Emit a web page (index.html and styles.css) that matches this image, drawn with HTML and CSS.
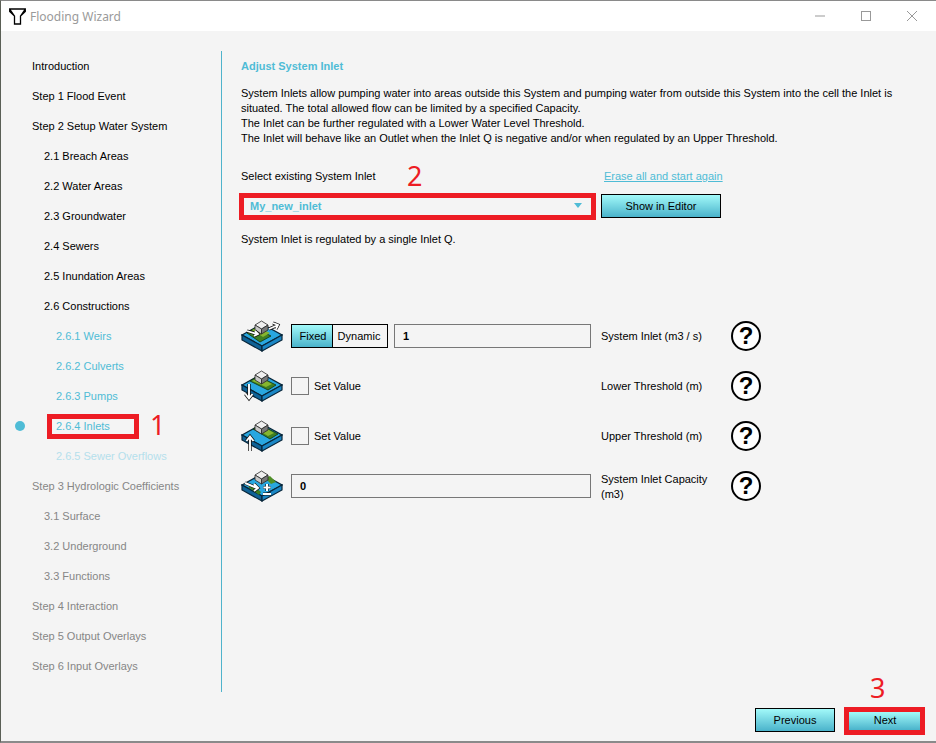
FILE: index.html
```html
<!DOCTYPE html>
<html lang="en">
<head>
<meta charset="utf-8">
<title>Flooding Wizard</title>
<link rel="stylesheet" href="styles.css">
</head>
<body>
<svg class="defs" width="0" height="0" aria-hidden="true">
  <symbol id="base" viewBox="0 0 42 34">
    <polygon points="1,16 21,5 41,16 21,27" fill="#29a7e0" stroke="#08263a" stroke-width="1.2"/>
    <polygon points="1,16 21,27 21,32 1,21" fill="#0f6296" stroke="#08263a" stroke-width="1.2"/>
    <polygon points="21,27 41,16 41,21 21,32" fill="#1a86c4" stroke="#08263a" stroke-width="1.2"/>
  </symbol>
  <symbol id="cube" viewBox="0 0 42 34">
    <polygon points="14,6 20.500,2 27,6 20.500,10" fill="#efefef" stroke="#2a2a2a" stroke-width=".8"/>
    <polygon points="14,6 20.500,10 20.500,15 14,11" fill="#c8c8c8" stroke="#2a2a2a" stroke-width=".8"/>
    <polygon points="20.500,10 27,6 27,11 20.500,15" fill="#777" stroke="#2a2a2a" stroke-width=".8"/>
  </symbol>
</svg>
<div class="window">
  <header class="titlebar">
    <svg class="app-logo" viewBox="0 0 17 17"><path d="M.7 1H16.300V3.500L11.500 8V16H5.500V8L.7 3.500Z M.7 1.200L5.500 8M16.300 1.200L11.500 8" fill="#fff" stroke="#000" stroke-width="1.300"/></svg>
    <span class="title">Flooding Wizard</span>
    <div class="controls">
      <svg class="ctl" viewBox="0 0 12 12"><path d="M1 6H11" stroke="#999" fill="none"/></svg>
      <svg class="ctl" viewBox="0 0 12 12"><rect x="1.500" y="1.500" width="9" height="9" stroke="#999" fill="none"/></svg>
      <svg class="ctl" viewBox="0 0 12 12"><path d="M1 1L11 11M11 1L1 11" stroke="#999" fill="none"/></svg>
    </div>
  </header>
  <div class="content">
    <nav class="nav">
      <div class="item">Introduction</div>
      <div class="item">Step 1 Flood Event</div>
      <div class="item">Step 2 Setup Water System</div>
      <div class="item l2">2.1 Breach Areas</div>
      <div class="item l2">2.2 Water Areas</div>
      <div class="item l2">2.3 Groundwater</div>
      <div class="item l2">2.4 Sewers</div>
      <div class="item l2">2.5 Inundation Areas</div>
      <div class="item l2">2.6 Constructions</div>
      <div class="item l3 teal">2.6.1 Weirs</div>
      <div class="item l3 teal">2.6.2 Culverts</div>
      <div class="item l3 teal">2.6.3 Pumps</div>
      <div class="item l3 teal current"><span class="dot"></span><span class="mark">2.6.4 Inlets</span><span class="num num-1">1</span></div>
      <div class="item l3 pale">2.6.5 Sewer Overflows</div>
      <div class="item off">Step 3 Hydrologic Coefficients</div>
      <div class="item l2 off">3.1 Surface</div>
      <div class="item l2 off">3.2 Underground</div>
      <div class="item l2 off">3.3 Functions</div>
      <div class="item off">Step 4 Interaction</div>
      <div class="item off">Step 5 Output Overlays</div>
      <div class="item off">Step 6 Input Overlays</div>
    </nav>
    <main class="main">
      <h1 class="heading">Adjust System Inlet</h1>
      <p class="intro">System Inlets allow pumping water into areas outside this System and pumping water from outside this System into the cell the Inlet is<br>situated. The total allowed flow can be limited by a specified Capacity.<br>The Inlet can be further regulated with a Lower Water Level Threshold.<br>The Inlet will behave like an Outlet when the Inlet Q is negative and/or when regulated by an Upper Threshold.</p>
      <div class="select-head">
        <span class="select-label">Select existing System Inlet</span>
        <span class="num num-2">2</span>
        <a class="erase">Erase all and start again</a>
      </div>
      <div class="select-row">
        <div class="dropdown"><span>My_new_inlet</span><i class="caret"></i></div>
        <button class="btn editor">Show in Editor</button>
      </div>
      <p class="status">System Inlet is regulated by a single Inlet Q.</p>
      <div class="rows">
        <div class="row">
          <svg class="ico" viewBox="0 0 42 34"><use href="#base"/><polygon points="6,14 14,9 30,17 19,23" fill="#3f7f22" stroke="#12340e" stroke-width=".8"/><polygon points="11,11 17,8 29,14 22,18" fill="#86b52f"/><use href="#cube"/><path d="M6 12L16 15M14 12L17 15L13 17M28 10L37 6M32 4L37 6L35 10" stroke="#111" stroke-width="3.200" fill="none"/><path d="M6 12L16 15M14 12L17 15L13 17M28 10L37 6M32 4L37 6L35 10" stroke="#fff" stroke-width="1.800" fill="none"/></svg>
          <div class="seg"><span class="seg-on">Fixed</span><span class="seg-off">Dynamic</span></div>
          <div class="field short">1</div>
          <span class="label">System Inlet (m3 / s)</span>
          <span class="help">?</span>
        </div>
        <div class="row">
          <svg class="ico" viewBox="0 0 42 34"><use href="#base"/><polygon points="9,12 17,7 35,16 27,21" fill="#3f7f22" stroke="#12340e" stroke-width=".8"/><polygon points="11,12 18,8 31,15 25,18" fill="#86b52f"/><use href="#cube"/><path d="M8 15V29M4.500 25L8 29.500L11.500 25" stroke="#111" stroke-width="3.400" fill="none"/><path d="M8 15V29M4.500 25L8 29.500L11.500 25" stroke="#fff" stroke-width="1.900" fill="none"/></svg>
          <span class="check"></span><span class="set">Set Value</span>
          <span class="label">Lower Threshold (m)</span>
          <span class="help">?</span>
        </div>
        <div class="row">
          <svg class="ico" viewBox="0 0 42 34"><use href="#base"/><polygon points="12,10 20,6 37,15 29,20" fill="#3f7f22" stroke="#12340e" stroke-width=".8"/><polygon points="15,10 21,7 33,14 27,17" fill="#86b52f"/><use href="#cube"/><path d="M9 32V18M5.500 22L9 17.500L12.500 22" stroke="#111" stroke-width="3.400" fill="none"/><path d="M9 32V18M5.500 22L9 17.500L12.500 22" stroke="#fff" stroke-width="1.900" fill="none"/></svg>
          <span class="check"></span><span class="set">Set Value</span>
          <span class="label">Upper Threshold (m)</span>
          <span class="help">?</span>
        </div>
        <div class="row">
          <svg class="ico" viewBox="0 0 42 34"><use href="#base"/><polygon points="7,18 12,16 20,23 18,26" fill="#3f7f22"/><polygon points="24,9 29,7 35,13 30,15" fill="#4f8f26"/><use href="#cube"/><path d="M4 14L16 19M13 15L17 19L13 22M26 15V22M22.500 18.500H29.500M22 25H30" stroke="#111" stroke-width="3.200" fill="none"/><path d="M4 14L16 19M13 15L17 19L13 22M26 15V22M22.500 18.500H29.500M22 25H30" stroke="#fff" stroke-width="2" fill="none"/></svg>
          <div class="field long">0</div>
          <span class="label two-line">System Inlet Capacity<br>(m3)</span>
          <span class="help">?</span>
        </div>
      </div>
    </main>
  </div>
  <footer class="footer">
    <button class="btn prev">Previous</button>
    <div class="next-wrap"><span class="num num-3">3</span><button class="btn next">Next</button></div>
  </footer>
</div>
</body>
</html>
```

FILE: styles.css
```css
* { box-sizing: border-box; }
html, body { margin: 0; height: 100%; }
body { font-family: "Liberation Sans", Arial, sans-serif; font-size: 11px; color: #000; background: #f4f4f4; overflow: hidden; }
.defs { position: absolute; }
.window { width: 936px; height: 743px; display: flex; flex-direction: column; border-top: 1px solid #8a8a8a; border-left: 1px solid #5a5f55; border-bottom: 2px solid #8a8a8a; background: #f4f4f4; }
.titlebar { height: 30px; flex: none; background: #fff; display: flex; align-items: center; padding-left: 8px; }
.app-logo { width: 17px; height: 17px; }
.title { margin-left: 4px; font-family: "Noto Sans", sans-serif; font-size: 12px; color: #9a9a9a; }
.controls { margin-left: auto; display: flex; gap: 34px; padding-right: 18px; }
.ctl { width: 12px; height: 12px; display: block; }

.content { flex: none; height: 641px; margin-top: 20px; display: flex; }
.nav { width: 221px; flex: none; height: 641px; border-right: 1px solid #4fb3cc; padding-left: 31px; }
.item { height: 30px; display: flex; align-items: center; white-space: nowrap; }
.l2 { padding-left: 12px; }
.l3 { padding-left: 24px; }
.teal { color: #4fbcd6; }
.pale { color: #b5e0ec; }
.off { color: #868686; }
.current { position: relative; }
.dot { position: absolute; left: -17px; top: 10px; width: 10px; height: 10px; border-radius: 50%; background: #4fbcd6; }
.mark { margin-left: -9px; width: 92px; height: 25px; border: 5px solid #ed1c24; padding-left: 4px; display: flex; align-items: center; }
.num { font-family: "Noto Sans", sans-serif; font-size: 27px; line-height: 30px; color: #ed1c24; }
.num-1 { margin-left: 11px; padding-bottom: 2px; }

.main { flex: 1; padding-left: 19px; }
.heading { margin: 9px 0 0; font-size: 11px; line-height: 12px; font-weight: bold; color: #4fbcd6; }
.intro { margin: 14px 0 0; line-height: 15px; white-space: nowrap; }
.select-head { margin-top: 15px; height: 30px; display: flex; align-items: center; }
.select-label { width: 166px; }
.num-2 { width: 197px; }
.erase { color: #4fbcd6; text-decoration: underline; }
.select-row { margin-top: 2px; display: flex; align-items: flex-start; margin-left: -2px; }
.dropdown { width: 357px; height: 27px; border: 5px solid #ed1c24; color: #4fbcd6; font-weight: bold; display: flex; align-items: center; justify-content: space-between; padding: 0 9px 2px 6px; }
.caret { width: 0; height: 0; border-left: 4px solid transparent; border-right: 4px solid transparent; border-top: 5px solid #4fbcd6; }
.btn { font: inherit; color: #000; border: 1px solid #000; background: linear-gradient(#a2f9f9, #4ab3cb); padding: 0; }
.editor { width: 120px; height: 24px; margin: 1px 0 0 5px; }
.status { margin: 13px 0 0; line-height: 13px; }
.rows { margin-top: 65px; }
.row { height: 50px; display: flex; align-items: center; }
.ico { width: 42px; height: 34px; flex: none; margin-right: 8px; }
.seg { width: 97px; height: 24px; display: flex; border: 1px solid #000; flex: none; }
.seg-on { width: 41px; padding-left: 2px; display: flex; align-items: center; justify-content: center; background: linear-gradient(#a2f9f9, #4ab3cb); border-right: 1px solid #000; }
.seg-off { flex: 1; padding-right: 2px; display: flex; align-items: center; justify-content: center; }
.field { height: 24px; border: 1px solid #777; font-weight: bold; padding-left: 8px; display: flex; align-items: center; flex: none; }
.short { width: 197px; margin-left: 6px; }
.long { width: 300px; }
.check { width: 18px; height: 18px; border: 1px solid #777; flex: none; }
.set { width: 282px; padding-left: 5px; flex: none; }
.label { margin-left: 10px; width: 130px; line-height: 15px; flex: none; }
.two-line { margin-top: 2px; }
.help { width: 30px; height: 30px; flex: none; border: 2.5px solid #000; border-radius: 50%; background: #fff; font-size: 24px; font-weight: bold; display: flex; align-items: center; justify-content: center; }

.footer { flex: 1; display: flex; justify-content: flex-end; align-items: flex-start; padding: 16px 11px 0 0; }
.prev { width: 80px; height: 24px; margin-right: 9px; }
.next-wrap { position: relative; }
.next { width: 81px; height: 28px; margin-top: -1px; padding: 0 0 2px 1px; display: block; border: 5px solid #ed1c24; }
.num-3 { position: absolute; left: 26px; top: -35px; }
```
